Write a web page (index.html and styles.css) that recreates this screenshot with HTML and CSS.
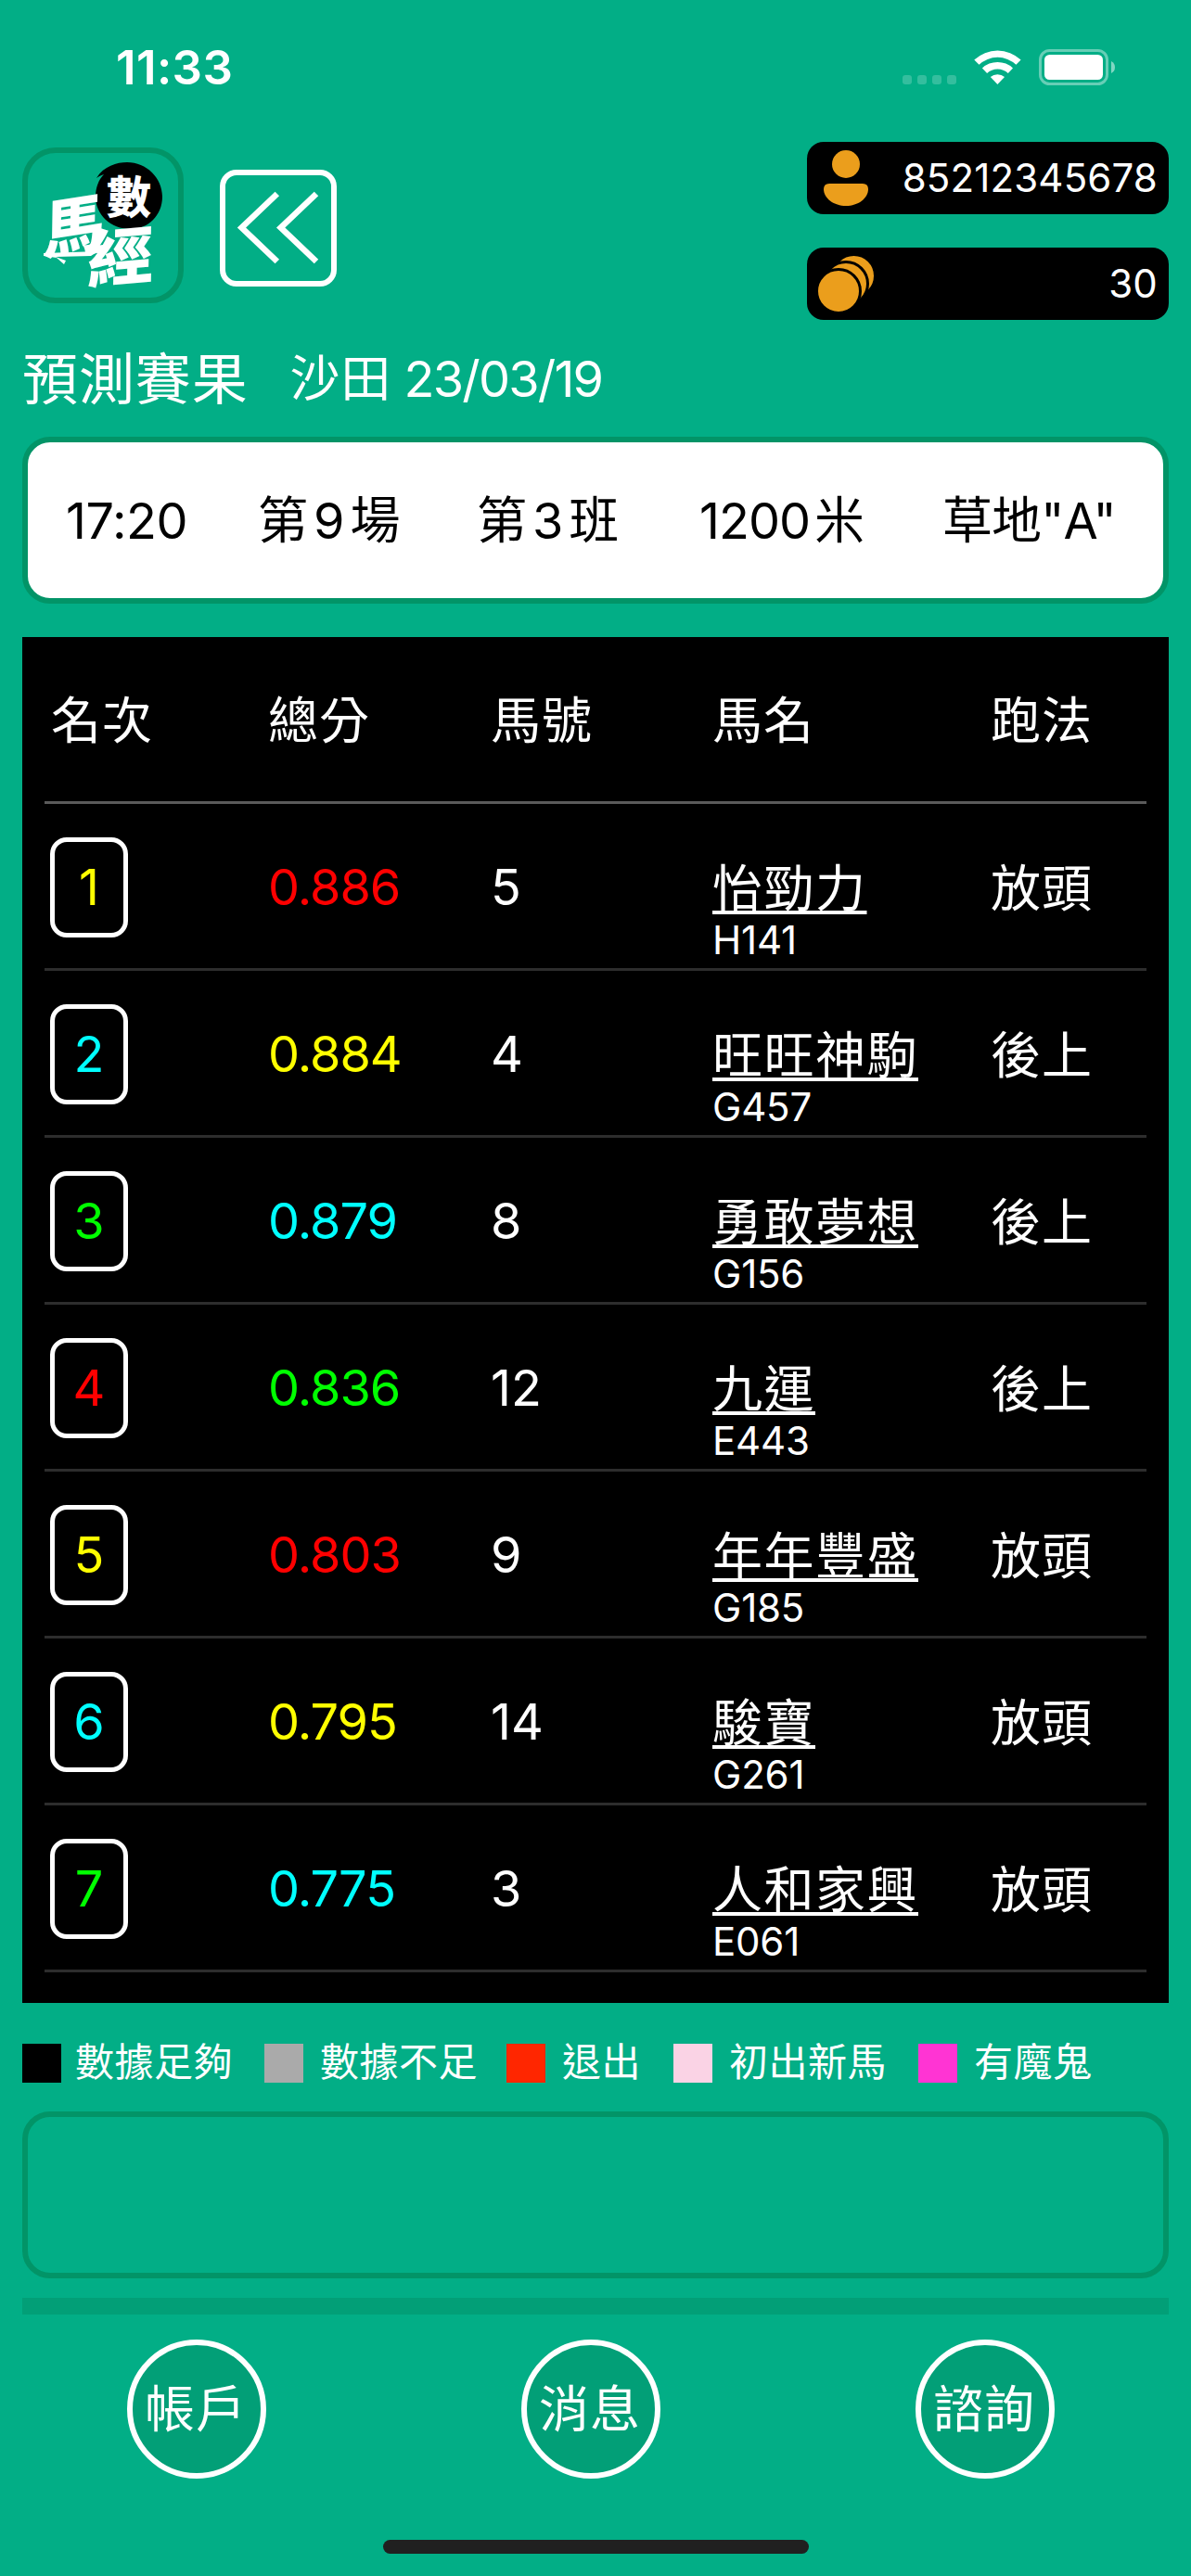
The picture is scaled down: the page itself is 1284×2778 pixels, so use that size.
FILE: index.html
```html
<!DOCTYPE html>
<html lang="zh-Hant">
<head>
<meta charset="utf-8">
<title>數馬經</title>
<link rel="stylesheet" href="styles.css">
</head>
<body>
<div class="app">
  <div class="status">
    <span class="clock">11:33</span>
    <svg class="signals" width="232" height="42" viewBox="972 52 232 42">
      <g fill="#fff" fill-opacity=".2"><rect x="973" y="81" width="10" height="10" rx="3"/><rect x="989" y="81" width="10" height="10" rx="3"/><rect x="1005" y="81" width="10" height="10" rx="3"/><rect x="1021" y="81" width="10" height="10" rx="3"/></g>
      <g fill="#fff"><path d="M1050.3 64.6a36.500 36.500 0 0 1 50.300 0l-5.200 5.200a29 29 0 0 0-39.900 0z"/><path d="M1058.900 73.500a24 24 0 0 1 33.100 0l-5.200 5.400a16.500 16.500 0 0 0-22.700 0z"/><path d="M1067.800 83.100a11.500 11.500 0 0 1 15.200 0l-7.600 8z"/></g>
      <rect x="1121.500" y="54.500" width="72" height="36" rx="10" fill="none" stroke="#fff" stroke-opacity=".4" stroke-width="3"/>
      <rect x="1126" y="59" width="63" height="27" rx="5.500" fill="#fff"/>
      <path d="M1198 66q4 2 4 6.500t-4 6.500z" fill="#fff" fill-opacity=".5"/>
    </svg>
  </div>

  <header class="top">
    <div class="logo">
      <svg width="162" height="156" viewBox="30 165 162 156">
        <path d="M104 192c8-13 22-17 33-17 21 0 38 17 38 37s-15 35-34 35c-22 0-38-16-38-35 0-9 3-18 9-24-4 1-6 3-8 4z" fill="#000"/>
        <g class="brush" text-anchor="middle">
          <text class="brush-small" transform="translate(139 229.500)">數</text>
          <text class="brush-big" transform="translate(79 269) rotate(-9) skewX(-10)">馬</text>
          <text class="brush-big" transform="translate(129 302) rotate(-5) skewX(-6) scale(1.060 1)">經</text>
        </g>
        <path d="M47 273L106 271L98 276L60 277L71 281L69 285L61 278L47 276z" fill="#fff"/>
      </svg>
    </div>
    <div class="back">
      <svg width="114" height="114" viewBox="243 189 114 114"><g fill="none" stroke="#fff" stroke-width="6.500"><path d="M298.800 209L260.500 245.500L298.800 282"/><path d="M341 209L302.700 245.500L341 282"/></g></svg>
    </div>
    <div class="badges">
      <div class="badge">
        <svg width="60" height="78" viewBox="882 153 60 78" fill="#eb9e1c"><circle cx="912" cy="177" r="15"/><path d="M894 198h36q6 0 6 6c0 10-11 18-24 18s-24-8-24-18q0-6 6-6z"/></svg>
        <span>85212345678</span>
      </div>
      <div class="badge">
        <svg width="60" height="78" viewBox="882 267 60 78" fill="#eb9e1c" stroke="#000" stroke-width="3"><circle cx="920.500" cy="297.500" r="23"/><circle cx="912" cy="306" r="23.500"/><circle cx="904" cy="314" r="23.500"/></svg>
        <span>30</span>
      </div>
    </div>
  </header>

  <div class="title"><h1>預測賽果</h1><span class="meeting">沙田 <span class="date">23/03/19</span></span></div>

  <div class="race"><span class="start">17:20</span><span>第<i>9</i>場</span><span>第<i>3</i>班</span><span class="dist">1200<b>米</b></span><span class="track">草地"A"</span></div>

  <main class="table">
    <div class="row head"><span class="rank-head">名次</span><span>總分</span><span>馬號</span><span>馬名</span><span>跑法</span></div>
    <div class="row"><span class="rank yellow">1</span><span class="score red">0.886</span><span>5</span><span class="horse"><u>怡勁力</u><small>H141</small></span><span class="style">放頭</span></div>
    <div class="row"><span class="rank cyan">2</span><span class="score yellow">0.884</span><span>4</span><span class="horse"><u>旺旺神駒</u><small>G457</small></span><span class="style">後上</span></div>
    <div class="row"><span class="rank green">3</span><span class="score cyan">0.879</span><span>8</span><span class="horse"><u>勇敢夢想</u><small>G156</small></span><span class="style">後上</span></div>
    <div class="row"><span class="rank red">4</span><span class="score green">0.836</span><span>12</span><span class="horse"><u>九運</u><small>E443</small></span><span class="style">後上</span></div>
    <div class="row"><span class="rank yellow">5</span><span class="score red">0.803</span><span>9</span><span class="horse"><u>年年豐盛</u><small>G185</small></span><span class="style">放頭</span></div>
    <div class="row"><span class="rank cyan">6</span><span class="score yellow">0.795</span><span>14</span><span class="horse"><u>駿寶</u><small>G261</small></span><span class="style">放頭</span></div>
    <div class="row"><span class="rank green">7</span><span class="score cyan">0.775</span><span>3</span><span class="horse"><u>人和家興</u><small>E061</small></span><span class="style">放頭</span></div>
  </main>

  <div class="legend">
    <span class="key enough">數據足夠</span><span class="key short">數據不足</span><span class="key out">退出</span><span class="key debut">初出新馬</span><span class="key devil">有魔鬼</span>
  </div>

  <div class="notice"></div>
  <div class="divider"></div>
  <nav class="nav"><span>帳戶</span><span>消息</span><span>諮詢</span></nav>
  <div class="home"></div>
</div>
</body>
</html>
```
FILE: styles.css
```css
* { box-sizing: border-box; }
body { margin: 0; background: #02ae86; }
.app {
  width: 1284px;
  height: 2778px;
  padding: 0 24px;
  display: flex;
  flex-direction: column;
  color: #fff;
  font: 400 54px/60px Inter, "Noto Sans CJK TC", sans-serif;
  overflow: hidden;
}

.status { height: 153px; padding: 43px 56px 0 101px; display: flex; justify-content: space-between; }
.clock { font-size: 51px; font-weight: 600; letter-spacing: 0.4px; }
.signals { margin-top: 9px; }

.top { height: 192px; display: flex; }
.logo { width: 174px; height: 168px; margin-top: 6px; border: 6px solid #029467; border-radius: 36px; }
.logo svg, .back svg, .badge svg { display: block; overflow: visible; }
.brush { font-family: "Noto Sans CJK TC", sans-serif; font-weight: 900; fill: #fff; }
.brush-small { font-size: 48px; }
.brush-big { font-size: 67px; }
.back { width: 126px; height: 126px; margin: 30px 0 0 39px; border: 6px solid #fff; border-radius: 18px; }
.badges { width: 390px; margin-left: auto; display: flex; flex-direction: column; gap: 36px; }
.badge { height: 78px; padding: 0 12px; border-radius: 18px; background: #000; display: flex; align-items: center; justify-content: space-between; font-size: 42px; letter-spacing: 0.15px; }

.title { height: 126px; padding-top: 2px; display: flex; align-items: center; }
h1 { margin: 0; font-size: 60px; font-weight: 400; letter-spacing: 0.9px; }
.meeting { margin-left: 45px; letter-spacing: 0.6px; }
.date { margin-left: -2px; letter-spacing: -1.8px; }

.race { height: 180px; border: 6px solid #029467; border-radius: 30px; background: #fff; color: #000; display: grid; grid-template-columns: 207px 236px 240px 262px 1fr; align-items: center; padding: 1px 0 0 41px; }
.race i { font-style: normal; margin: 0 6px; }
.race b { font-weight: 400; margin-left: 5px; letter-spacing: 0; }
.start { letter-spacing: -0.4px; }
.dist { letter-spacing: -1px; }
.track { letter-spacing: -0.9px; }

.table { height: 1473px; margin-top: 36px; padding: 0 24px; background: #000; }
.row { height: 180px; padding-top: 3px; border-bottom: 3px solid #2d2d2d; display: grid; grid-template-columns: 241px 240px 239px 300px 1fr; align-items: center; white-space: nowrap; }
.row.head { padding-top: 5px; border-color: #5a5a5a; letter-spacing: 0.9px; }
.rank-head { padding-left: 7px; }
.rank { width: 84px; height: 108px; margin-left: 6px; border: 5px solid #fff; border-radius: 18px; text-align: center; line-height: 98px; }
.score { letter-spacing: -1px; }
.style { padding-top: 3px; letter-spacing: 0.9px; }
.horse { display: flex; flex-direction: column; align-items: flex-start; align-self: end; padding-bottom: 3px; }
.horse u { margin-bottom: -2px; letter-spacing: 1.5px; text-decoration-thickness: 4px; text-underline-offset: 4px; text-decoration-skip-ink: none; }
.horse small { font-size: 42px; line-height: 54px; letter-spacing: -0.2px; }
.yellow { color: #ff0; }
.cyan { color: #0ff; }
.green { color: #0f0; }
.red { color: #f00; }

.legend { height: 117px; padding-top: 10px; display: grid; grid-template-columns: 261px 261px 180px 264px 1fr; align-items: center; }
.key { display: flex; align-items: center; font-size: 42px; line-height: 54px; letter-spacing: 0.5px; white-space: nowrap; }
.key::before { content: ""; width: 42px; height: 42px; margin-top: 2px; margin-right: 18px; background: #000; }
.enough::before { margin-right: 15px; }
.short::before { background: #aaa; }
.out::before { background: #ff2600; }
.debut::before { background: #fad3e5; }
.devil::before { background: #ff34d3; }

.notice { height: 180px; border: 6px solid #029467; border-radius: 30px; }
.divider { height: 18px; margin-top: 21px; background: #029f77; }
.nav { height: 150px; margin: 27px 123px 0 113px; display: flex; justify-content: space-between; }
.nav span { width: 150px; height: 150px; padding-right: 2px; border: 6px solid #fff; border-radius: 50%; background: #029f77; text-align: center; line-height: 140px; letter-spacing: 0.9px; white-space: nowrap; }
.home { width: 459px; height: 15px; margin: 66px auto 0; border-radius: 8px; background: #202020; }
```
